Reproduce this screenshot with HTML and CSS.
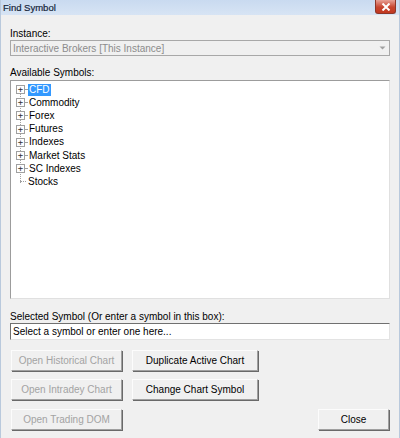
FILE: index.html
```html
<!DOCTYPE html>
<html>
<head>
<meta charset="utf-8">
<link rel="stylesheet" href="styles.css">
</head>
<body>
<div class="window">
  <div class="titlebar">
    <span class="title">Find Symbol</span>
    <div class="close"><svg width="10" height="8" viewBox="0 0 10 8"><path d="M1.5 0.5 L8.5 7.5 M8.5 0.5 L1.5 7.5" stroke="#fff" stroke-width="2"/></svg></div>
  </div>
  <div class="body">
    <div class="label l-instance">Instance:</div>
    <div class="combo">
      <span class="combo-text">Interactive Brokers [This Instance]</span>
      <div class="combo-btn"><svg width="7" height="4" viewBox="0 0 7 4"><path d="M0.5 0.5 L3.5 3.5 L6.5 0.5Z" fill="#a0a0a0"/></svg></div>
    </div>
    <div class="label l-avail">Available Symbols:</div>
    <div class="tree">
      <div class="vline"></div>
      <div class="node"><span class="exp">+</span><span class="hline"></span><span class="txt sel">CFD</span></div>
      <div class="node"><span class="exp">+</span><span class="hline"></span><span class="txt">Commodity</span></div>
      <div class="node"><span class="exp">+</span><span class="hline"></span><span class="txt">Forex</span></div>
      <div class="node"><span class="exp">+</span><span class="hline"></span><span class="txt">Futures</span></div>
      <div class="node"><span class="exp">+</span><span class="hline"></span><span class="txt">Indexes</span></div>
      <div class="node"><span class="exp">+</span><span class="hline"></span><span class="txt">Market Stats</span></div>
      <div class="node"><span class="exp">+</span><span class="hline"></span><span class="txt">SC Indexes</span></div>
      <div class="node"><span class="noexp"></span><span class="hline long"></span><span class="txt">Stocks</span></div>
    </div>
    <div class="label l-sel">Selected Symbol (Or enter a symbol in this box):</div>
    <div class="input">Select a symbol or enter one here...</div>
    <div class="buttons">
      <div class="row">
        <div class="btn left disabled">Open Historical Chart</div>
        <div class="btn mid">Duplicate Active Chart</div>
      </div>
      <div class="row">
        <div class="btn left disabled">Open Intradey Chart</div>
        <div class="btn mid">Change Chart Symbol</div>
      </div>
      <div class="row">
        <div class="btn left disabled">Open Trading DOM</div>
        <div class="spacer"></div>
        <div class="btn close-btn">Close</div>
      </div>
    </div>
  </div>
</div>
</body>
</html>
```
FILE: styles.css
```css
html, body {
  margin: 0;
  padding: 0;
  background: #f0f0f0;
}
body {
  font-family: "Liberation Sans", Arial, sans-serif;
  font-size: 10px;
  color: #000;
}
.window {
  width: 400px;
  height: 438px;
  background: #f0f0f0;
  box-sizing: border-box;
  border-left: 1px solid #b9c9dc;
  border-right: 1px solid #b9c9dc;
}
.titlebar {
  height: 15px;
  background: linear-gradient(#c9daf0, #d7e4f4);
  display: flex;
  align-items: center;
  position: relative;
}
.title {
  margin-left: 2px;
  font-family: "Liberation Sans", sans-serif;
  font-size: 9.5px;
  color: #15253a;
  -webkit-text-stroke: 0.2px #15253a;
}
.close {
  position: absolute;
  right: 3px;
  top: 0;
  width: 21px;
  height: 14px;
  background: linear-gradient(#e8a196, #c7452f 55%, #c2381f);
  border: 1px solid #8d3628;
  border-top: none;
  border-radius: 0 0 3px 3px;
  display: flex;
  align-items: center;
  justify-content: center;
  box-sizing: border-box;
}
.body {
  padding: 0 9px 0 9px;
  display: flex;
  flex-direction: column;
}
.label {
  height: 13px;
  line-height: 13px;
  color: #000;
}
.l-instance { margin-top: 12px; }
.combo {
  height: 16px;
  box-sizing: border-box;
  border: 1px solid #a8a8a8;
  background: #f0f0f0;
  display: flex;
  align-items: center;
}
.combo-text {
  flex: 1;
  padding-left: 2px;
  color: #8c8c8c;
}
.combo-btn {
  width: 13px;
  height: 14px;
  display: flex;
  align-items: center;
  justify-content: center;
}
.l-avail { margin-top: 10px; }
.tree {
  margin-top: 1px;
  height: 219px;
  box-sizing: border-box;
  background: #fff;
  border: 1px solid #9c9c9c;
  border-right-color: #e0e0e0;
  border-bottom-color: #e0e0e0;
  padding-top: 2px;
  position: relative;
}
.vline {
  position: absolute;
  left: 9px;
  top: 10px;
  height: 92px;
  border-left: 1px dotted #a0a0a0;
}
.node {
  height: 13.2px;
  display: flex;
  align-items: center;
  padding-left: 5px;
  position: relative;
}
.exp {
  width: 9px;
  height: 9px;
  box-sizing: border-box;
  border: 1px solid #a0a0a0;
  background: #fff;
  font-size: 9px;
  line-height: 6px;
  text-align: center;
  color: #333;
  font-family: "DejaVu Sans Mono", monospace;
  position: relative;
  z-index: 1;
}
.noexp {
  width: 9px;
  height: 9px;
}
.hline {
  width: 2px;
  border-top: 1px dotted #a0a0a0;
}
.hline.long { width: 6px; margin-left: -5px; }
.txt {
  padding: 0 1px 0 1px;
  margin-left: 1px;
  line-height: 12px;
}
.sel {
  background: #3399ff;
  color: #fff;
}
.l-sel { margin-top: 11px; }
.input {
  height: 17px;
  box-sizing: border-box;
  border: 1px solid #a0a0a0;
  border-right-color: #e3e3e3;
  border-bottom-color: #e3e3e3;
  border-left-color: #707070;
  border-top-color: #707070;
  background: #fff;
  padding-left: 2px;
  line-height: 15px;
  color: #000;
}
.buttons {
  margin-top: 10px;
  display: flex;
  flex-direction: column;
  gap: 8px;
}
.row {
  display: flex;
  gap: 10px;
  height: 21px;
}
.row + .row + .row { margin-top: 1px; }
.btn {
  height: 21px;
  box-sizing: border-box;
  background: #f0f0f0;
  border: 1px solid;
  border-color: #fcfcfc #a0a0a0 #a0a0a0 #fcfcfc;
  box-shadow: 1px 1px 0 #696969;
  display: flex;
  align-items: center;
  justify-content: center;
  white-space: nowrap;
}
.left { width: 111px; margin-left: 1px; }
.mid { width: 126px; }
.disabled { color: #a3a3a3; }
.spacer { flex: 1; }
.close-btn { width: 71px; margin-right: 1px; }
```
